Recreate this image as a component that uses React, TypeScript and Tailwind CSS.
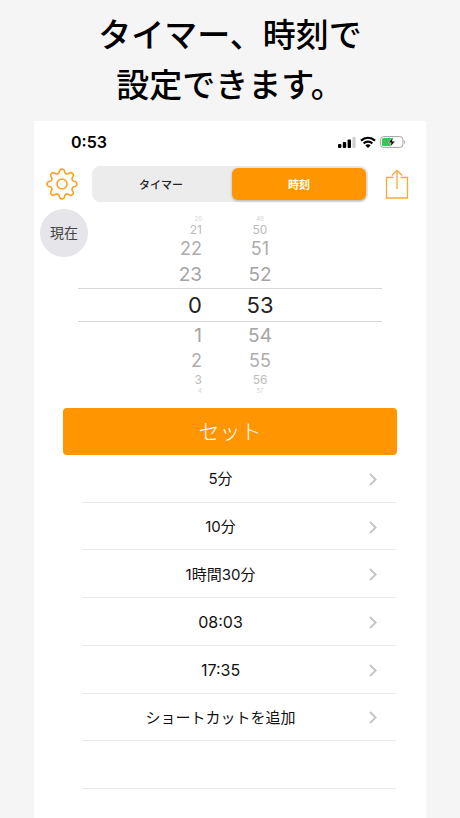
import { useState } from 'react';
import clsx from 'clsx';

interface IWheelRow {
  hour: string;
  minute: string;
  className: string;
}

// rows get flatter and paler towards the edges of the wheel
const WHEEL_ROWS: IWheelRow[] = [
  { hour: '20', minute: '49', className: 'h-2 text-[6px] leading-[8px] text-[#d4d4d4]' },
  { hour: '21', minute: '50', className: 'h-3.5 text-xs leading-[14px] text-[#bcbcbc]' },
  { hour: '22', minute: '51', className: 'h-6 text-lg leading-6 text-[#adadad]' },
  { hour: '23', minute: '52', className: 'h-[27px] text-[19px] leading-6 text-[#a4a4a4]' },
  { hour: '0', minute: '53', className: 'h-[34px] border-y border-[#d8d8d8] text-[22px] leading-8 text-[#222]' },
  { hour: '1', minute: '54', className: 'h-[27px] text-[19px] leading-6 text-[#a4a4a4]' },
  { hour: '2', minute: '55', className: 'h-6 text-lg leading-6 text-[#adadad]' },
  { hour: '3', minute: '56', className: 'h-3.5 text-xs leading-[14px] text-[#bcbcbc]' },
  { hour: '4', minute: '57', className: 'h-2 text-[6px] leading-[8px] text-[#d4d4d4]' },
];

const SHORTCUTS = [
  { label: '5分', className: 'text-[15px]' },
  { label: '10分', className: 'text-[15px]' },
  { label: '1時間30分', className: 'text-[15px]' },
  { label: '08:03', className: 'text-base' },
  { label: '17:35', className: 'text-base' },
  { label: 'ショートカットを追加', className: 'text-[15px]' },
];

const getGearPath = () => {
  const steps = 160;
  const points = Array.from({ length: steps }, (_, i) => {
    const angle = (i / steps) * Math.PI * 2;
    const radius = 13 + 1.9 * (Math.tanh(1.4 * Math.cos(angle * 8)) / Math.tanh(1.4));
    return `${(16 + radius * Math.cos(angle)).toFixed(2)} ${(16 + radius * Math.sin(angle)).toFixed(2)}`;
  });
  return `M${points.join('L')}Z`;
};

const GEAR_PATH = getGearPath();

const GearIcon = () => (
  <svg width={32} height={32} viewBox="0 0 32 32" fill="none" stroke="#f9a11f" strokeWidth={1.6} strokeLinejoin="round">
    <path d={GEAR_PATH} />
    <circle cx={16} cy={16} r={5} />
  </svg>
);

const ShareIcon = () => (
  <svg width={24} height={30} viewBox="0 0 24 30" fill="none" stroke="#f9a83a" strokeWidth={1.3}>
    <path d="M8.5 8.5H1.5V29H22.5V8.5H15.5" />
    <path d="M12 20V1.5M6.8 6.5L12 1.3L17.2 6.5" />
  </svg>
);

const SignalIcon = () => (
  <svg width={18} height={12} viewBox="0 0 18 12">
    <rect x={0} y={8} width={3.4} height={4} rx={0.9} />
    <rect x={4.8} y={6} width={3.4} height={6} rx={0.9} />
    <rect x={9.6} y={3.5} width={3.4} height={8.5} rx={0.9} />
    <rect x={14.4} y={0.8} width={3.2} height={11.2} rx={0.9} fill="#cfcfcf" />
  </svg>
);

const WifiIcon = () => (
  <svg width={16} height={12} viewBox="0 0 16 12" fill="none" stroke="#000" strokeWidth={2.2}>
    <path d="M1 4.6C5 .8 11 .8 15 4.6" />
    <path d="M3.7 7.5C6.1 5.1 9.9 5.1 12.3 7.5" />
    <path d="M8 12L5.4 9.4C6.8 8 9.2 8 10.6 9.4Z" fill="#000" stroke="none" />
  </svg>
);

const BatteryIcon = () => (
  <svg width={26} height={12} viewBox="0 0 26 12">
    <rect x={0.6} y={0.6} width={22.3} height={10.8} rx={3} fill="#fff" stroke="#a3a3a3" />
    <path d="M3.6 2H12L10.6 10H3.6A1.6 1.6 0 0 1 2 8.4V3.6A1.6 1.6 0 0 1 3.6 2Z" fill="#34c759" />
    <path d="M13.3 .9L8.3 6.7H11.2L10.1 11.1L15.2 5.2H12.2Z" fill="#000" stroke="#fff" strokeWidth={0.5} />
    <path d="M24.2 4C25.6 4.6 25.6 7.4 24.2 8Z" fill="#a3a3a3" />
  </svg>
);

const ChevronIcon = () => (
  <svg width={8} height={13} viewBox="0 0 8 13" fill="none" stroke="#c4c4c7" strokeWidth={1.8}>
    <path d="M1 1L6.6 6.5L1 12" />
  </svg>
);

const App = () => {
  const [mode, setMode] = useState<'timer' | 'time'>('time');

  const getTabClass = (active: boolean) =>
    clsx(
      'flex-1 rounded-md pt-0.5 text-[11px]',
      active ? 'bg-[#ff9500] font-bold text-white shadow-[0_1px_3px_rgba(0,0,0,0.25)]' : 'font-medium text-[#222]'
    );

  return (
    <div className="flex min-h-screen flex-col bg-[#f5f5f5] font-['Inter','Noto_Sans_CJK_JP',sans-serif] text-black">
      <h1 className="flex h-[121px] flex-col pt-2.5 text-center text-[33px] leading-[50px] font-medium">
        <span>タイマー、時刻で</span>
        <span>設定できます。</span>
      </h1>

      <main className="mx-[34px] flex flex-1 flex-col bg-white">
        <div className="flex h-[45px] items-center justify-between pr-5 pb-1 pl-[37px]">
          <span className="text-base leading-5 font-semibold">0:53</span>
          <div className="flex items-center gap-1">
            <SignalIcon />
            <WifiIcon />
            <BatteryIcon />
          </div>
        </div>

        <div className="flex h-9 items-center pr-[17px] pl-3">
          <button type="button" aria-label="設定" className="mr-3.5">
            <GearIcon />
          </button>
          <div className="flex h-9 flex-1 gap-1 rounded-lg bg-[#ececec] p-0.5">
            <button
              type="button"
              aria-pressed={mode === 'timer'}
              className={getTabClass(mode === 'timer')}
              onClick={() => setMode('timer')}
            >
              タイマー
            </button>
            <button
              type="button"
              aria-pressed={mode === 'time'}
              className={getTabClass(mode === 'time')}
              onClick={() => setMode('time')}
            >
              時刻
            </button>
          </div>
          <button type="button" aria-label="共有" className="ml-[17px]">
            <ShareIcon />
          </button>
        </div>

        <div className="mt-[7px] flex h-12 pl-1.5">
          <button type="button" className="size-12 rounded-full bg-[#e5e5ea] text-sm text-[#444]">
            現在
          </button>
        </div>

        <div className="mx-11 -mt-[42px] flex flex-col">
          {WHEEL_ROWS.map((row) => (
            <div key={row.hour} className={clsx('flex items-center justify-center', row.className)}>
              <span className="w-1/2 pr-7 text-right">{row.hour}</span>
              <span className="w-1/2">
                <span className="block w-15 text-center">{row.minute}</span>
              </span>
            </div>
          ))}
        </div>

        <button
          type="button"
          className="mx-[29px] mt-[13px] h-[47px] rounded bg-[#ff9500] text-[21px] leading-8 font-light text-white"
        >
          セット
        </button>

        <ul className="mr-[30px] ml-12 grid min-h-[334px] auto-rows-fr">
          {SHORTCUTS.map((shortcut) => (
            <li key={shortcut.label} className="flex border-b border-[#e9e9e9]">
              <button
                type="button"
                className={clsx('flex flex-1 items-center pt-0.5 pr-[19px] leading-5 text-[#111]', shortcut.className)}
              >
                <span className="flex-1 pr-2.5">{shortcut.label}</span>
                <ChevronIcon />
              </button>
            </li>
          ))}
          <li className="border-b border-[#e9e9e9]" />
        </ul>
      </main>
    </div>
  );
};

export default App;
